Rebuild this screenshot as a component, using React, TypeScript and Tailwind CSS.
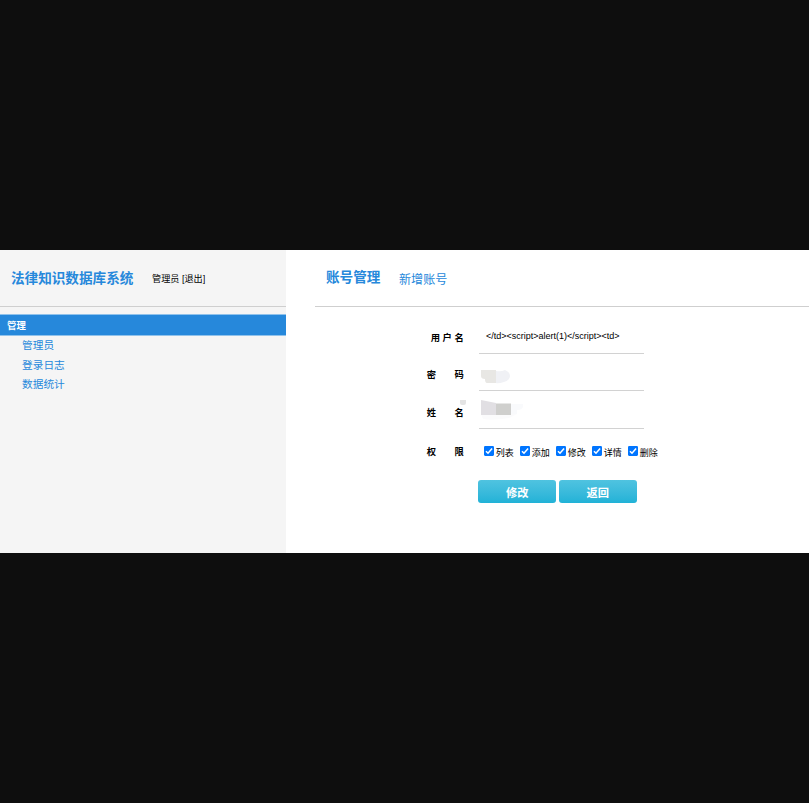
import type { ReactNode } from 'react';

const menu = ['管理员', '登录日志', '数据统计'];
const permissions = ['列表', '添加', '修改', '详情', '删除'];

function Label({ chars }: { chars: string[] }) {
  const wide = chars.length === 3;
  return (
    <div className={`flex justify-between text-[9.3px] font-bold leading-[12px] text-black ${wide ? 'ml-[4px] w-[33px]' : 'w-[37px]'}`}>
      {chars.map((c) => (
        <span key={c}>{c}</span>
      ))}
    </div>
  );
}

function Field({ chars, className, children }: { chars: string[]; className: string; children: ReactNode }) {
  return (
    <div className={`flex ${className}`}>
      <div className="w-[52px] shrink-0 pt-[15px]">
        <Label chars={chars} />
      </div>
      <div className="w-[165px] border-b border-[#d2d2d2]">{children}</div>
    </div>
  );
}

function Checkbox({ label }: { label: string }) {
  return (
    <label className="flex w-[36px] shrink-0 items-start">
      <svg className="mr-[2px] h-[10px] w-[10px] shrink-0" viewBox="0 0 13 13">
        <rect width="13" height="13" rx="1.500" fill="#0075ff" />
        <path d="M2.6 6.8 5.2 9.4 10.5 3.2" fill="none" stroke="#fff" strokeWidth="2" />
      </svg>
      <span className="whitespace-nowrap pt-[1px] text-[9px] leading-[13px]">{label}</span>
    </label>
  );
}

function Button({ children }: { children: ReactNode }) {
  return (
    <button className="h-[23px] w-[78px] rounded-[3px] bg-linear-to-b from-[#4fc3e0] to-[#20b2d7] pt-[3px] text-[11.25px] font-bold leading-[20px] text-white">
      {children}
    </button>
  );
}

export default function App() {
  return (
    <div className="h-[803px] w-[809px] overflow-hidden bg-[#0e0e0e] pt-[250px] font-['Liberation_Sans','Noto_Sans_CJK_SC',sans-serif] text-black">
      <div className="flex h-[303px] bg-white">
        <aside className="w-[286px] shrink-0 bg-[#f5f5f5]">
          <header className="flex h-[57px] items-center border-b border-[#cfcfcf] pl-[11px]">
            <h1 className="w-[141px] whitespace-nowrap pt-[2px] text-[13.6px] font-bold text-[#2688db]">法律知识数据库系统</h1>
            <span className="whitespace-nowrap pt-[3px] text-[9.15px]">管理员 [退出]</span>
          </header>
          <div className="mt-[7px] h-[22px] border-y border-[#90c2eb] bg-[#2688db] pl-[7px] text-[9.4px] font-bold leading-[21px] text-white">
            管理
          </div>
          <nav className="pl-[22px] text-[10.7px] leading-[19.5px] text-[#2688db]">
            {menu.map((m) => (
              <div key={m}>{m}</div>
            ))}
          </nav>
        </aside>
        <main className="min-w-0 flex-1 pl-[29.4px]">
          <header className="flex h-[57px] items-start border-b border-[#cfcfcf] pl-[10.6px] text-[#2688db]">
            <h2 className="w-[73px] whitespace-nowrap pt-[18px] text-[13.6px] font-bold leading-[20px]">账号管理</h2>
            <a className="whitespace-nowrap pt-[20px] text-[12.1px] leading-[20px]">新增账号</a>
          </header>
          <form className="pl-[111.3px] pt-[8px]">
            <Field chars={['用', '户', '名']} className="h-[39px] [&>div:first-child]:pt-[17px]">
              <div className="whitespace-nowrap pl-[7.3px] pt-[15px] text-[9px] leading-[12px]">
                {'</td><script>alert(1)</script><td>'}
              </div>
            </Field>
            <Field chars={['密', '码']} className="h-[37px]">
              <svg className="ml-[2px] mt-[16px] h-[14px] w-[30px]" viewBox="0 0 30 14">
                <path d="M0 0h15v13H6q-2 0-2-4Q0 9 0 6Z" fill="#e8e7e4" />
                <path d="M15 1Q20 2 24 0q5 2 5 6t-6 6-8 1Z" fill="#f0f1f5" />
              </svg>
            </Field>
            <Field chars={['姓', '名']} className="relative h-[38px] [&>div:first-child]:pt-[16px]">
              <svg className="ml-[2px] mt-[8px] h-[22px] w-[44px]" viewBox="0 0 44 22">
                <path d="M0 15h36l-8 4q-16 3-26 1Z" fill="#fbfbfc" />
                <path d="M0 1 15 4v12H0Z" fill="#e1dfe3" />
                <path d="M15 4.500H30V16H15Z" fill="#cfcfcd" />
                <path d="M30 5h12q1 6-6 6v4h-6Z" fill="#f9fafc" />
              </svg>
              <span className="absolute left-[33px] top-[9px] h-[5px] w-[6px] rounded-b-[2px] bg-[#e4e4e4]" />
            </Field>
            <div className="flex h-[51px] pt-[17px]">
              <div className="w-[57px] shrink-0">
                <Label chars={['权', '限']} />
              </div>
              {permissions.map((p) => (
                <Checkbox key={p} label={p} />
              ))}
            </div>
            <div className="flex gap-[2.5px] pl-[51.7px]">
              <Button>修改</Button>
              <Button>返回</Button>
            </div>
          </form>
        </main>
      </div>
    </div>
  );
}
